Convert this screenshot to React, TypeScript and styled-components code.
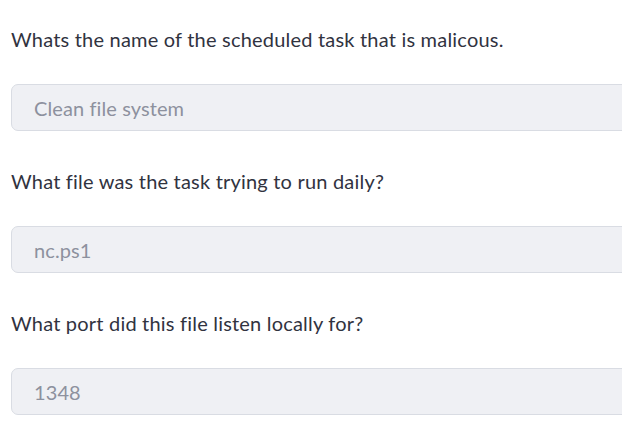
import styled, { createGlobalStyle } from "styled-components";

const GlobalStyle = createGlobalStyle`
  html, body {
    margin: 0;
    padding: 0;
    background: #ffffff;
  }
  body {
    font-family: "Lato", "Liberation Sans", sans-serif;
    font-variant-ligatures: none;
    color: #31333f;
    overflow: hidden;
  }
`;

const questions = [
  { label: "Whats the name of the scheduled task that is malicous.", value: "Clean file system" },
  { label: "What file was the task trying to run daily?", value: "nc.ps1" },
  { label: "What port did this file listen locally for?", value: "1348" },
];

const Page = styled.main`
  display: flex;
  flex-direction: column;
  gap: 38px;
  padding: 27px 0 0 11px;
  width: 640px;
`;

const Field = styled.section`
  display: flex;
  flex-direction: column;
`;

const Label = styled.label`
  font-size: 20px;
  letter-spacing: 0.2px;
  line-height: 24px;
  margin-bottom: 33px;
  color: #31333f;
`;

const Input = styled.div`
  box-sizing: border-box;
  height: 47px;
  display: flex;
  align-items: center;
  padding-left: 22px;
  background: #eff0f4;
  border: 1px solid #d9dce3;
  border-radius: 7px;
  font-size: 20px;
  letter-spacing: 0.1px;
  color: #8d919e;
`;

export default function App() {
  return (
    <>
      <GlobalStyle />
      <Page>
        {questions.map((q) => (
          <Field key={q.label}>
            <Label>{q.label}</Label>
            <Input>{q.value}</Input>
          </Field>
        ))}
      </Page>
    </>
  );
}
